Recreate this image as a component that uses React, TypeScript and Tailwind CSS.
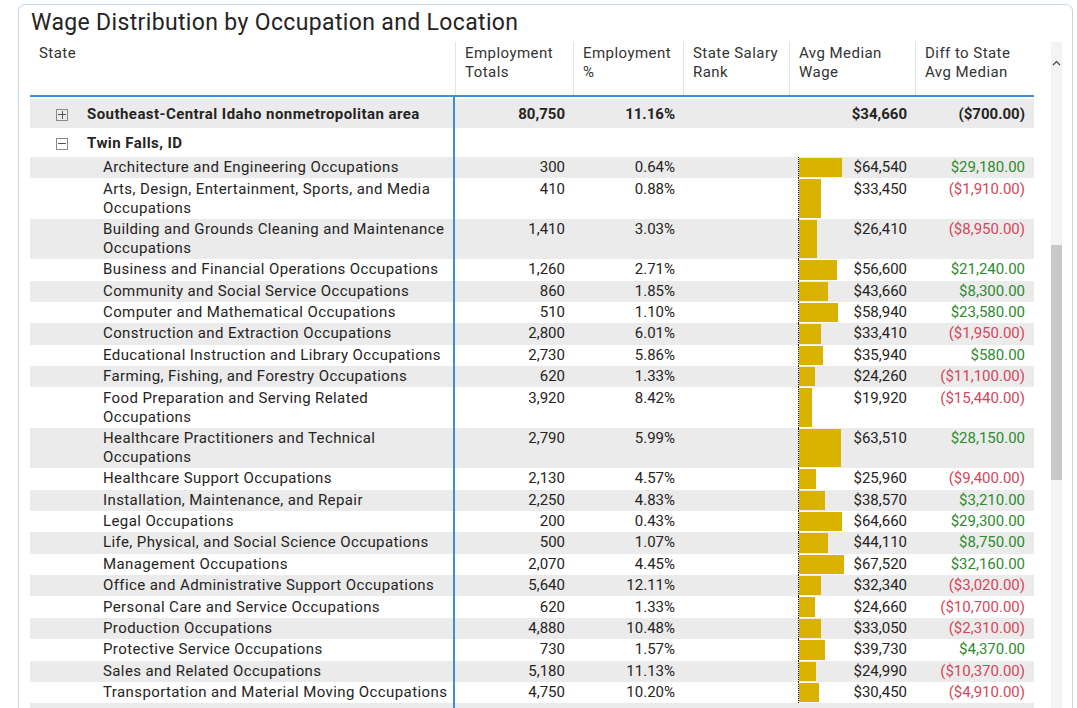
import React from 'react'

interface Occupation {
    name: string[]
    total: string
    pct: string
    wage: number
    diff: string
    neg?: boolean
}

const occupations: Occupation[] = [
    { name: ['Architecture and Engineering Occupations'], total: '300', pct: '0.64%', wage: 64540, diff: '$29,180.00' },
    { name: ['Arts, Design, Entertainment, Sports, and Media', 'Occupations'], total: '410', pct: '0.88%', wage: 33450, diff: '($1,910.00)', neg: true },
    { name: ['Building and Grounds Cleaning and Maintenance', 'Occupations'], total: '1,410', pct: '3.03%', wage: 26410, diff: '($8,950.00)', neg: true },
    { name: ['Business and Financial Operations Occupations'], total: '1,260', pct: '2.71%', wage: 56600, diff: '$21,240.00' },
    { name: ['Community and Social Service Occupations'], total: '860', pct: '1.85%', wage: 43660, diff: '$8,300.00' },
    { name: ['Computer and Mathematical Occupations'], total: '510', pct: '1.10%', wage: 58940, diff: '$23,580.00' },
    { name: ['Construction and Extraction Occupations'], total: '2,800', pct: '6.01%', wage: 33410, diff: '($1,950.00)', neg: true },
    { name: ['Educational Instruction and Library Occupations'], total: '2,730', pct: '5.86%', wage: 35940, diff: '$580.00' },
    { name: ['Farming, Fishing, and Forestry Occupations'], total: '620', pct: '1.33%', wage: 24260, diff: '($11,100.00)', neg: true },
    { name: ['Food Preparation and Serving Related', 'Occupations'], total: '3,920', pct: '8.42%', wage: 19920, diff: '($15,440.00)', neg: true },
    { name: ['Healthcare Practitioners and Technical', 'Occupations'], total: '2,790', pct: '5.99%', wage: 63510, diff: '$28,150.00' },
    { name: ['Healthcare Support Occupations'], total: '2,130', pct: '4.57%', wage: 25960, diff: '($9,400.00)', neg: true },
    { name: ['Installation, Maintenance, and Repair'], total: '2,250', pct: '4.83%', wage: 38570, diff: '$3,210.00' },
    { name: ['Legal Occupations'], total: '200', pct: '0.43%', wage: 64660, diff: '$29,300.00' },
    { name: ['Life, Physical, and Social Science Occupations'], total: '500', pct: '1.07%', wage: 44110, diff: '$8,750.00' },
    { name: ['Management Occupations'], total: '2,070', pct: '4.45%', wage: 67520, diff: '$32,160.00' },
    { name: ['Office and Administrative Support Occupations'], total: '5,640', pct: '12.11%', wage: 32340, diff: '($3,020.00)', neg: true },
    { name: ['Personal Care and Service Occupations'], total: '620', pct: '1.33%', wage: 24660, diff: '($10,700.00)', neg: true },
    { name: ['Production Occupations'], total: '4,880', pct: '10.48%', wage: 33050, diff: '($2,310.00)', neg: true },
    { name: ['Protective Service Occupations'], total: '730', pct: '1.57%', wage: 39730, diff: '$4,370.00' },
    { name: ['Sales and Related Occupations'], total: '5,180', pct: '11.13%', wage: 24990, diff: '($10,370.00)', neg: true },
    { name: ['Transportation and Material Moving Occupations'], total: '4,750', pct: '10.20%', wage: 30450, diff: '($4,910.00)', neg: true },
]

const cols = 'grid grid-cols-[425px_118px_110px_106px_126px_119px]'
const maxWage = 67520

const ExpandBox = ({ open }: { open: boolean }) => (
    <span className="relative w-[12px] h-[12px] border border-[#8a8a8a] flex items-center justify-center">
        <span className="absolute w-[8px] h-px bg-[#555]" />
        {!open && <span className="absolute w-px h-[8px] bg-[#555]" />}
    </span>
)

const GroupRow = ({ label, open, gray, children }: { label: string; open: boolean; gray?: boolean; children?: React.ReactNode }) => (
    <div className={`${cols} h-[29px] font-bold ${gray ? 'bg-[#ebebeb]' : 'bg-white'}`}>
        <div className="flex items-center gap-[19px] pl-[26px] pt-[2px] border-r-2 border-[#3b8ed8]">
            <ExpandBox open={open} />
            <span className="tracking-[0.45px]">{label}</span>
        </div>
        {children}
    </div>
)

const App = () => {
    return (
        <div className="w-[1077px] h-[708px] overflow-hidden bg-white pl-[18px] pt-[4px] text-[#252423]" style={{ fontFamily: 'Roboto, "Liberation Sans", sans-serif' }}>
            <div className="w-[1055px] h-[720px] border border-[#c3d6e2] rounded-[7px]">
                <h1 className="pl-[12px] pt-[2px] text-[23px] leading-[32px] font-normal tracking-[0.35px]">Wage Distribution by Occupation and Location</h1>
                <div className="flex mt-[3px] ml-[11px]">
                    <div className="w-[1004px] text-[15px] leading-[19px]">
                        {/* header */}
                        <div className={`${cols} h-[55px] border-b-2 border-[#3b8ed8] tracking-[0.45px] text-[#333]`}>
                            <div className="pl-[9px] pt-[2px]">State</div>
                            <div className="pl-[9px] pt-[2px] border-l border-[#e3e3e3]">Employment<br />Totals</div>
                            <div className="pl-[9px] pt-[2px] border-l border-[#e3e3e3]">Employment<br />%</div>
                            <div className="pl-[9px] pt-[2px] border-l border-[#e3e3e3]">State Salary<br />Rank</div>
                            <div className="pl-[9px] pt-[2px] border-l border-[#e3e3e3]">Avg Median<br />Wage</div>
                            <div className="pl-[9px] pt-[2px] border-l border-[#e3e3e3]">Diff to State<br />Avg Median</div>
                        </div>
                        <div className={`${cols} h-[2px]`}>
                            <div className="border-r-2 border-[#3b8ed8]" />
                        </div>

                        <GroupRow label="Southeast-Central Idaho nonmetropolitan area" open={false} gray>
                            <div className="flex items-center justify-end pr-[8px] pt-[2px]">80,750</div>
                            <div className="flex items-center justify-end pr-[8px] pt-[2px]">11.16%</div>
                            <div />
                            <div className="flex items-center justify-end pr-[8px] pt-[2px]">$34,660</div>
                            <div className="flex items-center justify-end pr-[9px] pt-[2px]">($700.00)</div>
                        </GroupRow>
                        <GroupRow label="Twin Falls, ID" open />

                        {occupations.map((o, i) => (
                            <div key={o.name.join(' ')} className={`${cols} ${i % 2 === 0 ? 'bg-[#ebebeb]' : 'bg-white'}`}>
                                <div className="pl-[73px] py-[1.2px] border-r-2 border-[#3b8ed8] whitespace-nowrap tracking-[0.4px]">
                                    {o.name.map(line => <div key={line}>{line}</div>)}
                                </div>
                                <div className="text-right pr-[8px] py-[1.2px]">{o.total}</div>
                                <div className="text-right pr-[8px] py-[1.2px]">{o.pct}</div>
                                <div />
                                <div className="flex">
                                    <div className="ml-[9px] border-l border-dotted border-[#1a1a1a] py-[1px]">
                                        <div className="h-full bg-[#dab200]" style={{ width: Math.round(o.wage / maxWage * 45) }} />
                                    </div>
                                    <div className="flex-1 text-right pr-[8px] py-[1.2px]">${o.wage.toLocaleString('en-US')}</div>
                                </div>
                                <div className={`text-right pr-[9px] py-[1.2px] ${o.neg ? 'text-[#d4475c]' : 'text-[#2e8b2e]'}`}>{o.diff}</div>
                            </div>
                        ))}
                        <div className={`${cols} h-[22px] bg-[#ebebeb]`}>
                            <div className="border-r-2 border-[#3b8ed8]" />
                        </div>
                    </div>

                    {/* scrollbar */}
                    <div className="ml-[17px] w-[11px] bg-[#f3f3f3] flex flex-col items-center">
                        <svg width="9" height="6" viewBox="0 0 9 6" className="mt-[18px]">
                            <path d="M1 5 L4.5 1.5 L8 5" fill="none" stroke="#444" strokeWidth="1.2" />
                        </svg>
                        <div className="mt-[179px] w-full h-[235px] bg-[#c8c8c8]" />
                    </div>
                </div>
            </div>
        </div>
    )
}

export default App
